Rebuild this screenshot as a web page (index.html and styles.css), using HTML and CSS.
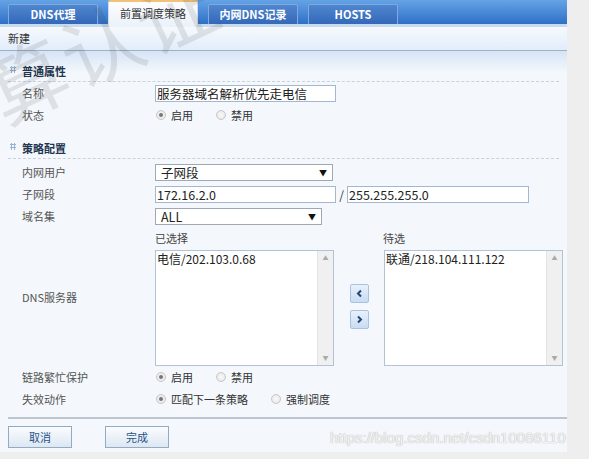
FILE: index.html
```html
<!DOCTYPE html>
<html>
<head>
<meta charset="utf-8">
<link rel="stylesheet" href="styles.css">
</head>
<body>
<div class="page">
  <div class="tabs">
    <div class="tab">DNS代理</div>
    <div class="tab active">前置调度策略</div>
    <div class="tab">内网DNS记录</div>
    <div class="tab">HOSTS</div>
  </div>
  <div class="toolbar">新建</div>
  <div class="content">
    <div class="section"><span class="grip"></span>普通属性</div>
    <div class="row"><span class="label">名称</span><div class="ctl"><span class="input w180">服务器域名解析优先走电信</span></div></div>
    <div class="row"><span class="label">状态</span><div class="ctl"><span class="radio on"></span><span class="rtext">启用</span><span class="radio"></span><span class="rtext">禁用</span></div></div>

    <div class="section s2"><span class="grip"></span>策略配置</div>
    <div class="row"><span class="label">内网用户</span><div class="ctl"><span class="select w178">子网段<i>▼</i></span></div></div>
    <div class="row"><span class="label">子网段</span><div class="ctl"><span class="input w180">172.16.2.0</span><span class="slash">/</span><span class="input w181">255.255.255.0</span></div></div>
    <div class="row"><span class="label">域名集</span><div class="ctl"><span class="select w167">ALL<i>▼</i></span></div></div>
    <div class="row"><span class="label"></span><div class="ctl"><span class="cap">已选择</span><span class="cap cap2">待选</span></div></div>
    <div class="row listrow"><span class="label">DNS服务器</span>
      <div class="ctl">
        <div class="list"><div class="items">电信/202.103.0.68</div><div class="sb"><i>▲</i><i>▼</i></div></div>
        <div class="movers">
          <span class="mv"><svg width="9" height="9" viewBox="0 0 9 9"><path d="M6 1.5 L3 4.5 L6 7.5" fill="none" stroke="#24467a" stroke-width="2"/></svg></span>
          <span class="mv"><svg width="9" height="9" viewBox="0 0 9 9"><path d="M3 1.5 L6 4.5 L3 7.5" fill="none" stroke="#24467a" stroke-width="2"/></svg></span>
        </div>
        <div class="list"><div class="items">联通/218.104.111.122</div><div class="sb"><i>▲</i><i>▼</i></div></div>
      </div>
    </div>
    <div class="row"><span class="label">链路繁忙保护</span><div class="ctl"><span class="radio on"></span><span class="rtext">启用</span><span class="radio"></span><span class="rtext">禁用</span></div></div>
    <div class="row"><span class="label">失效动作</span><div class="ctl"><span class="radio on"></span><span class="rtext wide">匹配下一条策略</span><span class="radio"></span><span class="rtext">强制调度</span></div></div>
  </div>
  <div class="footer">
    <span class="btn">取消</span>
    <span class="btn">完成</span>
  </div>
</div>
<div class="wm">算认证</div>
<div class="url">https://blog.csdn.net/csdn10086110</div>
</body>
</html>
```
FILE: styles.css
```css
html, body { margin: 0; padding: 0; }
body {
  width: 589px; height: 459px; overflow: hidden;
  background: #eeeeee;
  font-family: "Noto Sans CJK SC", "Liberation Sans", sans-serif;
  font-size: 11px; color: #555;
  position: relative;
}
.page { width: 567px; height: 452px; background: #f4f8fc; }
.tabs {
  height: 27px; box-sizing: border-box;
  background: linear-gradient(#65a3e6, #2f70c6);
  border-bottom: 3px solid #c6daf0;
  display: flex; align-items: flex-end; gap: 10px; padding-left: 8px;
}
.tab {
  width: 90px; height: 20px; box-sizing: border-box;
  border: 1px solid #80a9de; border-bottom: none;
  background: linear-gradient(#4f86cf, #3468b8);
  color: #fff; font-weight: bold; font-size: 11px;
  text-align: center; line-height: 19px;
  border-radius: 2px 2px 0 0;
}
.tab.active {
  height: 27px; margin-bottom: -3px; line-height: 23px;
  background: linear-gradient(#fdfdfd, #e9f1fa);
  border: 1px solid #d0dced; border-top: 2px solid #f2c27a; border-bottom: none;
  color: #333; font-weight: normal;
}
.toolbar {
  height: 24px; box-sizing: border-box;
  background: linear-gradient(#f6f9fd, #e2edfa);
  border-bottom: 1px solid #9fb0c3;
  padding-left: 8px; line-height: 23px; color: #333; font-size: 11px;
}
.content {
  background: linear-gradient(#d6e4f6 0, #f4f8fc 22px);
  padding-top: 12px;
}
.section {
  height: 18px; margin: 0 8px; border-bottom: 1px dashed #c9d2dc;
  color: #1f3550; font-size: 11px; font-weight: bold; line-height: 16px;
  padding-left: 14px; position: relative;
}
.section.s2 { margin-top: 14px; margin-bottom: 2px; }
.grip {
  position: absolute; left: 2px; top: 3px; width: 6px; height: 7px;
  background-image: radial-gradient(circle, #9ab3d0 1px, transparent 1.2px);
  background-size: 3px 3px;
}
.row { display: flex; align-items: center; height: 22px; }
.label { width: 133px; padding-left: 22px; flex: none; color: #555; font-size: 11px; }
.ctl { display: flex; align-items: center; }
.input, .select {
  height: 17px; box-sizing: border-box; background: #fff;
  border: 1px solid #a3b7cf; font-size: 12.5px; line-height: 15px;
  color: #222; padding-left: 1px; position: relative;
}
.select { border-color: #9fa9b4; padding-left: 5px; }
.select i { position: absolute; right: 5px; top: 0; font-style: normal; font-size: 8px; color: #111; }
.w180 { width: 181px; }
.w181 { width: 182px; }
.w178 { width: 178px; }
.w167 { width: 167px; }
.slash { width: 11px; text-align: center; color: #333; font-size: 12px; }
.radio {
  width: 10px; height: 10px; border-radius: 50%; box-sizing: border-box;
  border: 1px solid #c8c8c8; background: radial-gradient(#fafafa, #e2e2e2);
  margin-left: 1px; margin-right: 5px; flex: none; position: relative;
}
.radio.on::after {
  content: ""; position: absolute; left: 2px; top: 2px; width: 4px; height: 4px;
  border-radius: 50%; background: #777;
}
.rtext { width: 44px; color: #333; font-size: 11px; }
.rtext.wide { width: 99px; }
.cap { width: 228px; color: #444; font-size: 11px; }
.cap2 { width: auto; }
.listrow { height: 117px; align-items: flex-start; }
.listrow .label { padding-top: 40px; }
.listrow .ctl { padding-top: 1px; }
.list {
  width: 179px; height: 116px; box-sizing: border-box;
  background: #fff; border: 1px solid #b2c3d6; display: flex;
}
.items { flex: 1; font-size: 12px; color: #222; line-height: 16px; padding-left: 1px; }
.sb {
  width: 15px; background: #f0f0f0; border-left: 1px solid #e4e4e4;
  display: flex; flex-direction: column; justify-content: space-between; align-items: center;
}
.sb i { font-style: normal; font-size: 6px; color: #aaa; line-height: 14px; }
.movers { width: 50px; display: flex; flex-direction: column; align-items: center; gap: 7px; padding-top: 34px; align-self: flex-start; }
.mv {
  width: 19px; height: 19px; box-sizing: border-box;
  border: 1px solid #a9c2e0; border-radius: 2px;
  background: linear-gradient(#e8f1fb, #c9dcf2);
  display: flex; align-items: center; justify-content: center;
}
.footer {
  margin: 7px 0 0 8px; border-top: 2px solid #bcc6cf;
  padding-top: 7px; display: flex; gap: 33px;
}
.btn {
  width: 64px; height: 22px; box-sizing: border-box;
  border: 1px solid #93a9c4; background: linear-gradient(#fbfcfe, #dde7f2);
  color: #27528c; font-size: 11px; text-align: center; line-height: 20px;
}
.wm {
  position: absolute; left: -28px; top: 58px;
  font-size: 80px; line-height: 80px; color: rgba(60,60,60,0.12);
  transform: rotate(-25deg); transform-origin: left top;
  letter-spacing: 2px; pointer-events: none;
  font-family: "Noto Sans CJK SC", sans-serif; white-space: nowrap;
}
.url {
  position: absolute; left: 330px; top: 429px;
  font-family: "Liberation Sans", sans-serif; font-size: 15px;
  color: #f3f3f3; text-shadow: 0 0 1px #b8b8b8, 0 0 1px #c0c0c0;
}
```
